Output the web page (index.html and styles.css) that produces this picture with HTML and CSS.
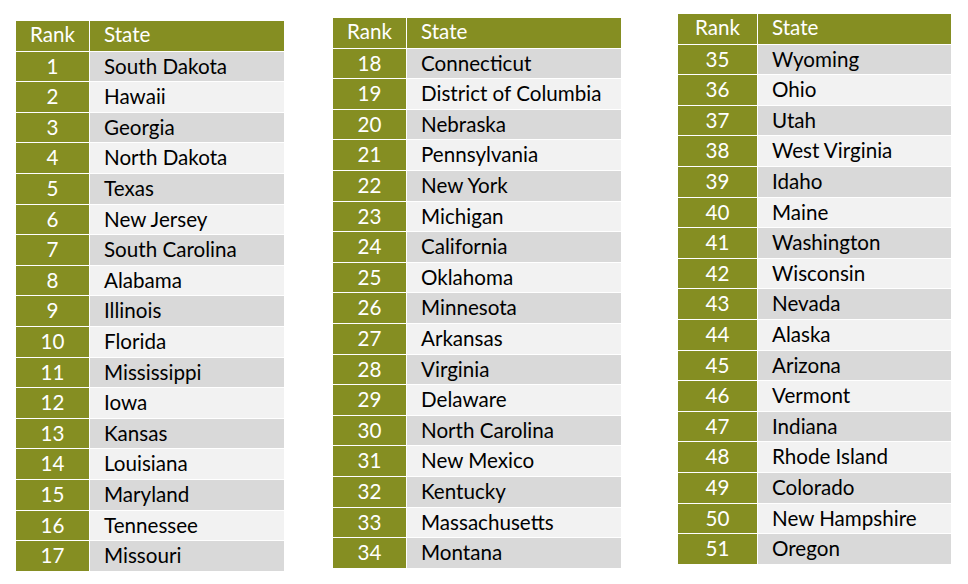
FILE: index.html
```html
<!DOCTYPE html>
<html>
<head>
<meta charset="utf-8">
<link rel="stylesheet" href="styles.css">
</head>
<body>
<div class="page">
  <div class="table t1">
    <div class="cell head rank">Rank</div><div class="cell head state">State</div>
    <div class="cell rank">1</div><div class="cell state dark">South Dakota</div>
    <div class="cell rank">2</div><div class="cell state light">Hawaii</div>
    <div class="cell rank">3</div><div class="cell state dark">Georgia</div>
    <div class="cell rank">4</div><div class="cell state light">North Dakota</div>
    <div class="cell rank">5</div><div class="cell state dark">Texas</div>
    <div class="cell rank">6</div><div class="cell state light">New Jersey</div>
    <div class="cell rank">7</div><div class="cell state dark">South Carolina</div>
    <div class="cell rank">8</div><div class="cell state light">Alabama</div>
    <div class="cell rank">9</div><div class="cell state dark">Illinois</div>
    <div class="cell rank">10</div><div class="cell state light">Florida</div>
    <div class="cell rank">11</div><div class="cell state dark">Mississippi</div>
    <div class="cell rank">12</div><div class="cell state light">Iowa</div>
    <div class="cell rank">13</div><div class="cell state dark">Kansas</div>
    <div class="cell rank">14</div><div class="cell state light">Louisiana</div>
    <div class="cell rank">15</div><div class="cell state dark">Maryland</div>
    <div class="cell rank">16</div><div class="cell state light">Tennessee</div>
    <div class="cell rank">17</div><div class="cell state dark">Missouri</div>
  </div>
  <div class="table t2">
    <div class="cell head rank">Rank</div><div class="cell head state">State</div>
    <div class="cell rank">18</div><div class="cell state dark">Connecticut</div>
    <div class="cell rank">19</div><div class="cell state light">District of Columbia</div>
    <div class="cell rank">20</div><div class="cell state dark">Nebraska</div>
    <div class="cell rank">21</div><div class="cell state light">Pennsylvania</div>
    <div class="cell rank">22</div><div class="cell state dark">New York</div>
    <div class="cell rank">23</div><div class="cell state light">Michigan</div>
    <div class="cell rank">24</div><div class="cell state dark">California</div>
    <div class="cell rank">25</div><div class="cell state light">Oklahoma</div>
    <div class="cell rank">26</div><div class="cell state dark">Minnesota</div>
    <div class="cell rank">27</div><div class="cell state light">Arkansas</div>
    <div class="cell rank">28</div><div class="cell state dark">Virginia</div>
    <div class="cell rank">29</div><div class="cell state light">Delaware</div>
    <div class="cell rank">30</div><div class="cell state dark">North Carolina</div>
    <div class="cell rank">31</div><div class="cell state light">New Mexico</div>
    <div class="cell rank">32</div><div class="cell state dark">Kentucky</div>
    <div class="cell rank">33</div><div class="cell state light">Massachusetts</div>
    <div class="cell rank">34</div><div class="cell state dark">Montana</div>
  </div>
  <div class="table t3">
    <div class="cell head rank">Rank</div><div class="cell head state">State</div>
    <div class="cell rank">35</div><div class="cell state dark">Wyoming</div>
    <div class="cell rank">36</div><div class="cell state light">Ohio</div>
    <div class="cell rank">37</div><div class="cell state dark">Utah</div>
    <div class="cell rank">38</div><div class="cell state light">West Virginia</div>
    <div class="cell rank">39</div><div class="cell state dark">Idaho</div>
    <div class="cell rank">40</div><div class="cell state light">Maine</div>
    <div class="cell rank">41</div><div class="cell state dark">Washington</div>
    <div class="cell rank">42</div><div class="cell state light">Wisconsin</div>
    <div class="cell rank">43</div><div class="cell state dark">Nevada</div>
    <div class="cell rank">44</div><div class="cell state light">Alaska</div>
    <div class="cell rank">45</div><div class="cell state dark">Arizona</div>
    <div class="cell rank">46</div><div class="cell state light">Vermont</div>
    <div class="cell rank">47</div><div class="cell state dark">Indiana</div>
    <div class="cell rank">48</div><div class="cell state light">Rhode Island</div>
    <div class="cell rank">49</div><div class="cell state dark">Colorado</div>
    <div class="cell rank">50</div><div class="cell state light">New Hampshire</div>
    <div class="cell rank">51</div><div class="cell state dark">Oregon</div>
  </div>
</div>
</body>
</html>
```
FILE: styles.css
```css
html, body {
  margin: 0;
  padding: 0;
  background: #ffffff;
}
.page {
  display: flex;
  align-items: flex-start;
  padding-left: 16px;
  font-family: Lato, "Liberation Sans", sans-serif;
  font-size: 20.6px;
}
.table {
  display: grid;
  grid-template-rows: repeat(18, 29.6px);
  gap: 1px;
}
.t1 {
  margin-top: 21px;
  grid-template-columns: 73px 194px;
}
.t2 {
  margin-top: 18px;
  margin-left: 49px;
  grid-template-columns: 73px 214px;
}
.t3 {
  margin-top: 14px;
  margin-left: 57px;
  grid-template-columns: 79px 193px;
}
.cell {
  line-height: 29.6px;
  white-space: nowrap;
  color: #000000;
}
.rank {
  background: #858e22;
  color: #ffffff;
  text-align: center;
}
.state {
  padding-left: 14px;
}
.head {
  background: #858e22;
  color: #ffffff;
  line-height: 27px;
}
.dark {
  background: #d9d9d9;
}
.light {
  background: #f2f2f2;
}
```
